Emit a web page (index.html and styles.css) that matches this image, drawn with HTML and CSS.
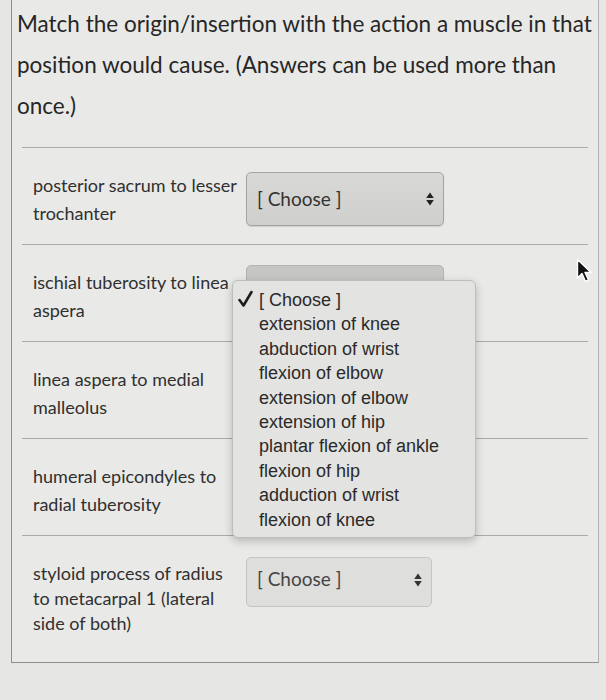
FILE: index.html
```html
<!DOCTYPE html>
<html>
<head>
<meta charset="utf-8">
<link rel="stylesheet" href="styles.css">
</head>
<body>
<div class="screen">
  <div class="panel">
    <p class="question">Match the origin/insertion with the action a muscle in that position would cause. (Answers can be used more than once.)</p>
    <div class="rows">
      <div class="row">
        <div class="label">posterior sacrum to lesser trochanter</div>
        <div class="select"><span>[ Choose ]</span><svg class="arrows" width="8" height="14" viewBox="0 0 8 14"><path d="M4 0.5 L7.8 6 H0.2 Z M4 13.5 L7.8 8 H0.2 Z" fill="#222"/></svg></div>
      </div>
      <div class="row">
        <div class="label">ischial tuberosity to linea aspera</div>
        <div class="select open"><span>[ Choose ]</span><svg class="arrows" width="8" height="14" viewBox="0 0 8 14"><path d="M4 0.5 L7.8 6 H0.2 Z M4 13.5 L7.8 8 H0.2 Z" fill="#222"/></svg></div>
      </div>
      <div class="row">
        <div class="label">linea aspera to medial malleolus</div>
      </div>
      <div class="row">
        <div class="label">humeral epicondyles to radial tuberosity</div>
      </div>
      <div class="row last">
        <div class="label">styloid process of radius to metacarpal 1 (lateral side of both)</div>
        <div class="select light"><span>[ Choose ]</span><svg class="arrows" width="8" height="14" viewBox="0 0 8 14"><path d="M4 0.5 L7.8 6 H0.2 Z M4 13.5 L7.8 8 H0.2 Z" fill="#333"/></svg></div>
      </div>
    </div>
  </div>

  <ul class="menu">
    <li class="checked"><svg class="check" width="15" height="18" viewBox="0 0 15 18"><path d="M1.5 10 L5.5 15.5 L13.5 2" fill="none" stroke="#1e1e1e" stroke-width="2.6" stroke-linecap="round" stroke-linejoin="round"/></svg>[ Choose ]</li>
    <li>extension of knee</li>
    <li>abduction of wrist</li>
    <li>flexion of elbow</li>
    <li>extension of elbow</li>
    <li>extension of hip</li>
    <li>plantar flexion of ankle</li>
    <li>flexion of hip</li>
    <li>adduction of wrist</li>
    <li>flexion of knee</li>
  </ul>

  <svg class="cursor" width="16" height="26" viewBox="0 0 16 26"><path d="M1.5 1.5 V20 L6 15.5 L9.5 23.5 L12.5 22 L9 14.5 H15 Z" fill="#111" stroke="#fff" stroke-width="1.4" stroke-linejoin="round"/></svg>
</div>
</body>
</html>
```

FILE: styles.css
```css
html, body {
  margin: 0;
  padding: 0;
}
body {
  background: #e4e4e2;
  font-family: Lato, "Open Sans", sans-serif;
  color: #333333;
}
.screen {
  position: relative;
  width: 606px;
  height: 700px;
  overflow: hidden;
  background: #e6e6e4;
}
.panel {
  margin-left: 11px;
  width: 588px;
  height: 663px;
  box-sizing: border-box;
  border-left: 1px solid #8f8f8f;
  border-right: 1px solid #b0b0b0;
  border-bottom: 1px solid #8f8f8f;
  background: #e9e9e7;
}
.question {
  margin: 0;
  padding: 3px 0 0 5px;
  font-size: 22.5px;
  line-height: 41px;
  color: #262626;
}
.rows {
  margin: 21px 10px 0 10px;
}
.row {
  display: flex;
  align-items: flex-start;
  gap: 7px;
  border-top: 1.5px solid #a9a9a9;
  padding: 23px 0 17px 11px;
  min-height: 56px;
}
.label {
  width: 206px;
  font-size: 18px;
  line-height: 28px;
  color: #303030;
}
.row.last .label {
  line-height: 25px;
  padding-top: 2px;
}
.select {
  width: 198px;
  height: 54px;
  box-sizing: border-box;
  margin-top: 1px;
  display: flex;
  align-items: center;
  justify-content: space-between;
  padding: 0 9px 0 10px;
  border: 1px solid #a4a4a4;
  border-radius: 5px;
  background: linear-gradient(#d8d8d6, #cfcfcd);
  box-shadow: 0 1px 1px rgba(0,0,0,0.12);
  font-size: 19px;
  color: #333;
}
.select span {
  margin-top: -2px;
}
.select.open {
  margin-top: -3px;
  background: #c6c6c4;
  border-color: #b5b5b5;
}
.select.light {
  width: 186px;
  height: 50px;
  margin-top: -2px;
  background: #dededc;
  border-color: #c4c4c2;
  box-shadow: none;
  color: #444;
  align-items: flex-start;
  padding-top: 11px;
}
.select.light .arrows {
  margin-top: 4px;
}
.menu {
  position: absolute;
  left: 232px;
  top: 280px;
  width: 244px;
  height: 258px;
  box-sizing: border-box;
  margin: 0;
  padding: 7px 0 0 0;
  list-style: none;
  background: #e3e3e1;
  border: 1px solid #bdbdbb;
  border-radius: 6px;
  box-shadow: 0 3px 8px rgba(0,0,0,0.22);
  font-family: "Liberation Sans", Arial, sans-serif;
  font-size: 18px;
  color: #2a2a2a;
}
.menu li {
  position: relative;
  padding-left: 26px;
  height: 24.4px;
  line-height: 24px;
}
.menu .check {
  position: absolute;
  left: 5px;
  top: 2px;
}
.cursor {
  position: absolute;
  left: 576px;
  top: 258px;
}
```
